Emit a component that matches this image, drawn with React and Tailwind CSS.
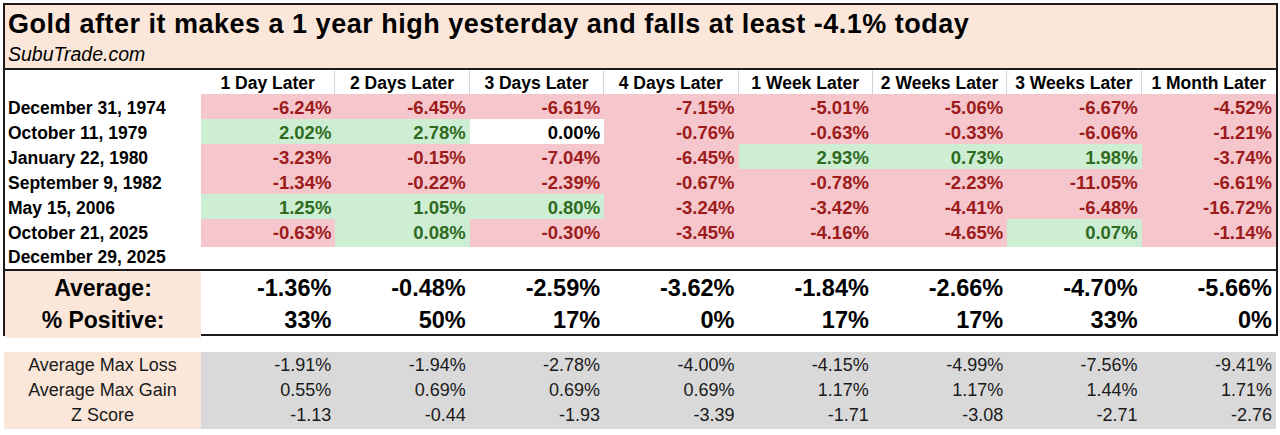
import React from 'react'

const cols = ['1 Day Later', '2 Days Later', '3 Days Later', '4 Days Later', '1 Week Later', '2 Weeks Later', '3 Weeks Later', '1 Month Later']

// each cell: [value, tone] tone: r = red, g = green, w = white (neutral)
const rows = [
    { date: 'December 31, 1974', cells: [['-6.24%', 'r'], ['-6.45%', 'r'], ['-6.61%', 'r'], ['-7.15%', 'r'], ['-5.01%', 'r'], ['-5.06%', 'r'], ['-6.67%', 'r'], ['-4.52%', 'r']] },
    { date: 'October 11, 1979', cells: [['2.02%', 'g'], ['2.78%', 'g'], ['0.00%', 'w'], ['-0.76%', 'r'], ['-0.63%', 'r'], ['-0.33%', 'r'], ['-6.06%', 'r'], ['-1.21%', 'r']] },
    { date: 'January 22, 1980', cells: [['-3.23%', 'r'], ['-0.15%', 'r'], ['-7.04%', 'r'], ['-6.45%', 'r'], ['2.93%', 'g'], ['0.73%', 'g'], ['1.98%', 'g'], ['-3.74%', 'r']] },
    { date: 'September 9, 1982', cells: [['-1.34%', 'r'], ['-0.22%', 'r'], ['-2.39%', 'r'], ['-0.67%', 'r'], ['-0.78%', 'r'], ['-2.23%', 'r'], ['-11.05%', 'r'], ['-6.61%', 'r']] },
    { date: 'May 15, 2006', cells: [['1.25%', 'g'], ['1.05%', 'g'], ['0.80%', 'g'], ['-3.24%', 'r'], ['-3.42%', 'r'], ['-4.41%', 'r'], ['-6.48%', 'r'], ['-16.72%', 'r']] },
    { date: 'October 21, 2025', cells: [['-0.63%', 'r'], ['0.08%', 'g'], ['-0.30%', 'r'], ['-3.45%', 'r'], ['-4.16%', 'r'], ['-4.65%', 'r'], ['0.07%', 'g'], ['-1.14%', 'r']] },
]

const averages = ['-1.36%', '-0.48%', '-2.59%', '-3.62%', '-1.84%', '-2.66%', '-4.70%', '-5.66%']
const positives = ['33%', '50%', '17%', '0%', '17%', '17%', '33%', '0%']

const extra = [
    { label: 'Average Max Loss', values: ['-1.91%', '-1.94%', '-2.78%', '-4.00%', '-4.15%', '-4.99%', '-7.56%', '-9.41%'] },
    { label: 'Average Max Gain', values: ['0.55%', '0.69%', '0.69%', '0.69%', '1.17%', '1.17%', '1.44%', '1.71%'] },
    { label: 'Z Score', values: ['-1.13', '-0.44', '-1.93', '-3.39', '-1.71', '-3.08', '-2.71', '-2.76'] },
]

const toneClass = {
    r: 'bg-[#f5c6cb] text-[#9c1b1b]',
    g: 'bg-[#ceeed3] text-[#2f6b1f]',
    w: 'bg-white text-black',
}

const grid = 'grid grid-cols-[196px_repeat(8,minmax(0,1fr))]'

export default function App() {
    return (
        <div className="w-[1280px] h-[435px] bg-white pl-[3px] pt-[3px] font-['Liberation_Sans',Arial,sans-serif] text-black">
            <div className="w-[1275px] border-2 border-[#1c1c1c]">
                {/* Title */}
                <div className="h-[65px] bg-[#fbe7da] pl-[3px] border-b-2 border-[#1c1c1c]">
                    <div className="text-[27px] font-bold leading-[27px] tracking-[0.5px] pt-[6px]">
                        Gold after it makes a 1 year high yesterday and falls at least -4.1% today
                    </div>
                    <div className="text-[19.5px] italic leading-[20px] pt-[6px]">SubuTrade.com</div>
                </div>

                {/* Column headers */}
                <div className={`${grid} h-[24px]`}>
                    <div />
                    {cols.map((c, i) => (
                        <div key={c} className={`flex items-center justify-center text-[17.5px] font-bold ${i < 7 ? 'border-r border-[#d4d4d4]' : ''}`}>
                            {c}
                        </div>
                    ))}
                </div>

                {/* Data rows */}
                {rows.map(r => (
                    <div key={r.date} className={`${grid} h-[25px]`}>
                        <div className="flex items-center pl-[3px] text-[17.5px] font-bold">{r.date}</div>
                        {r.cells.map(([v, t], i) => (
                            <div key={i} className={`flex items-center justify-end pr-[4px] text-[18.5px] font-bold ${toneClass[t]}`}>
                                {v}
                            </div>
                        ))}
                    </div>
                ))}
                <div className={`${grid} h-[25px]`}>
                    <div className="flex items-center pl-[3px] text-[17.5px] font-bold">December 29, 2025</div>
                </div>

                {/* Summary */}
                <div className="border-t-2 border-[#1c1c1c]">
                    <div className={`${grid} h-[32px]`}>
                        <div className="flex items-center justify-center bg-[#fbe7da] text-[23px] font-bold">Average:</div>
                        {averages.map((v, i) => (
                            <div key={i} className="flex items-center justify-end pr-[4px] text-[23.5px] font-bold">{v}</div>
                        ))}
                    </div>
                    <div className={`${grid} h-[31px]`}>
                        <div className="flex items-center justify-center bg-[#fbe7da] text-[23px] font-bold">% Positive:</div>
                        {positives.map((v, i) => (
                            <div key={i} className="flex items-center justify-end pr-[4px] text-[23.5px] font-bold">{v}</div>
                        ))}
                    </div>
                </div>
            </div>

            {/* Extra stats */}
            <div className="w-[1275px] pl-[1px] pr-[2px] mt-[16px]">
                {extra.map(r => (
                    <div key={r.label} className="grid grid-cols-[197px_repeat(8,minmax(0,1fr))] h-[25px] text-[18px] text-[#1a1a1a]">
                        <div className="flex items-center justify-center bg-[#fbe7da]">{r.label}</div>
                        {r.values.map((v, i) => (
                            <div key={i} className="flex items-center justify-end pr-[4px] bg-[#d9d9d9]">{v}</div>
                        ))}
                    </div>
                ))}
            </div>
        </div>
    )
}
